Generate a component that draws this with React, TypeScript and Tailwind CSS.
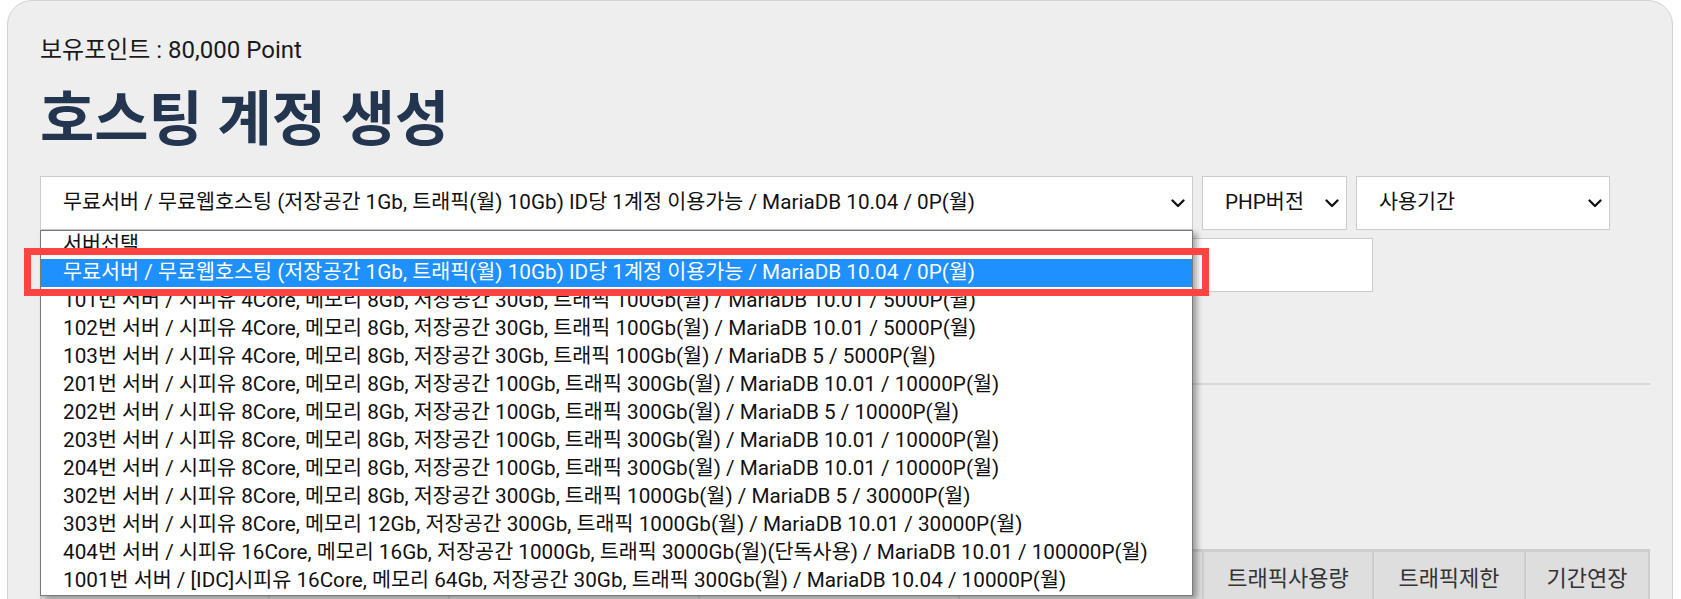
import React from "react";

const Chevron = () => (
  <svg width="14" height="9" viewBox="0 0 14 9" className="shrink-0">
    <path d="M1.5 1.5 L7 7 L12.5 1.5" fill="none" stroke="#111" strokeWidth="2.3" strokeLinecap="round" strokeLinejoin="round" />
  </svg>
);

const options = [
  "서버선택",
  "무료서버 / 무료웹호스팅 (저장공간 1Gb, 트래픽(월) 10Gb) ID당 1계정 이용가능 / MariaDB 10.04 / 0P(월)",
  "101번 서버 / 시피유 4Core, 메모리 8Gb, 저장공간 30Gb, 트래픽 100Gb(월) / MariaDB 10.01 / 5000P(월)",
  "102번 서버 / 시피유 4Core, 메모리 8Gb, 저장공간 30Gb, 트래픽 100Gb(월) / MariaDB 10.01 / 5000P(월)",
  "103번 서버 / 시피유 4Core, 메모리 8Gb, 저장공간 30Gb, 트래픽 100Gb(월) / MariaDB 5 / 5000P(월)",
  "201번 서버 / 시피유 8Core, 메모리 8Gb, 저장공간 100Gb, 트래픽 300Gb(월) / MariaDB 10.01 / 10000P(월)",
  "202번 서버 / 시피유 8Core, 메모리 8Gb, 저장공간 100Gb, 트래픽 300Gb(월) / MariaDB 5 / 10000P(월)",
  "203번 서버 / 시피유 8Core, 메모리 8Gb, 저장공간 100Gb, 트래픽 300Gb(월) / MariaDB 10.01 / 10000P(월)",
  "204번 서버 / 시피유 8Core, 메모리 8Gb, 저장공간 100Gb, 트래픽 300Gb(월) / MariaDB 10.01 / 10000P(월)",
  "302번 서버 / 시피유 8Core, 메모리 8Gb, 저장공간 300Gb, 트래픽 1000Gb(월) / MariaDB 5 / 30000P(월)",
  "303번 서버 / 시피유 8Core, 메모리 12Gb, 저장공간 300Gb, 트래픽 1000Gb(월) / MariaDB 10.01 / 30000P(월)",
  "404번 서버 / 시피유 16Core, 메모리 16Gb, 저장공간 1000Gb, 트래픽 3000Gb(월)(단독사용) / MariaDB 10.01 / 100000P(월)",
  "1001번 서버 / [IDC]시피유 16Core, 메모리 64Gb, 저장공간 30Gb, 트래픽 300Gb(월) / MariaDB 10.04 / 10000P(월)",
];

const headers = ["", "", "", "", "", "트래픽사용량", "트래픽제한", "기간연장"];

export default function App() {
  return (
    <div className="h-[599px] w-[1681px] overflow-hidden bg-white font-[Roboto,'Noto_Sans_CJK_KR',sans-serif] text-[#111]">
      <div className="ml-[7px] mr-[8px] h-[680px] rounded-[25px] border border-[#d2d2d2] bg-[#eeeeee] pl-[32px] pr-[22px] pt-[32px]">
        <div className="text-[24px] leading-[34px] text-[#1a1a1a]">보유포인트 : 80,000 Point</div>
        <h1 className="mt-[17px] text-[59px] font-bold leading-[72px] text-[#23354f]">호스팅 계정 생성</h1>

        <div className="relative mt-[20px]">
          <div className="flex gap-[9px]">
            <div className="flex h-[54px] w-[1153px] items-center justify-between border border-[#cccccc] bg-white pl-[22px] pr-[7px] text-[20.7px]">
              <span>무료서버 / 무료웹호스팅 (저장공간 1Gb, 트래픽(월) 10Gb) ID당 1계정 이용가능 / MariaDB 10.04 / 0P(월)</span>
              <Chevron />
            </div>
            <div className="flex h-[54px] w-[145px] items-center justify-between border border-[#cccccc] bg-white pl-[22px] pr-[7px] text-[20.7px]">
              <span>PHP버전</span>
              <Chevron />
            </div>
            <div className="flex h-[54px] w-[254px] items-center justify-between border border-[#cccccc] bg-white pl-[22px] pr-[7px] text-[20.7px]">
              <span>사용기간</span>
              <Chevron />
            </div>
          </div>
          <div className="mt-[8px] h-[54px] w-[1333px] border border-[#cccccc] bg-white" />

          <div className="mt-[91px] border-t-2 border-[#d8d8d8]" />

          <div className="mt-[164px] grid grid-cols-[230px_180px_250px_260px_244px_170px_152px_124px] border-t-[3px] border-[#cdcdcd] bg-[#dedede] text-[22px] text-[#333]">
            {headers.map((h, i) => (
              <div
                key={i}
                className={`flex h-[52px] items-center justify-center ${i === 0 ? "border-l-2" : ""} border-r-2 border-[#cdcdcd]`}
              >
                {h}
              </div>
            ))}
          </div>

          {/* open dropdown list */}
          <div className="absolute left-0 top-[54px] w-[1153px] border border-[#7a7a7a] bg-white text-[20.7px] text-[#111] shadow-[4px_3px_6px_rgba(0,0,0,0.35)]">
            {options.map((o, i) => (
              <div
                key={i}
                className={`flex h-[28px] items-center whitespace-nowrap pl-[22px] ${i === 1 ? "bg-[#1e90ff] text-white" : ""}`}
              >
                {o}
              </div>
            ))}
          </div>

          {/* red highlight box */}
          <div className="pointer-events-none absolute left-[-16px] top-[72px] h-[48px] w-[1185px] border-[7px] border-[#ff4343]" />
        </div>
      </div>
    </div>
  );
}
